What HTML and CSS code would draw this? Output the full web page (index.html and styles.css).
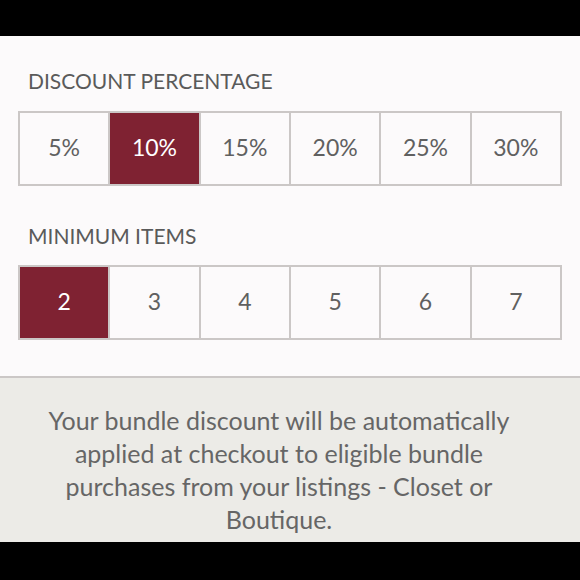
FILE: index.html
```html
<html>
<head>
<title>Bundle Discount</title>
<link rel="stylesheet" href="styles.css">
</head>
<body>

<div class="topbar"></div>

<div class="panel">
    <div class="label first">DISCOUNT PERCENTAGE</div>
    <div class="options">
        <div class="option">5%</div>
        <div class="option selected">10%</div>
        <div class="option">15%</div>
        <div class="option">20%</div>
        <div class="option">25%</div>
        <div class="option">30%</div>
    </div>

    <div class="label second">MINIMUM ITEMS</div>
    <div class="options">
        <div class="option selected">2</div>
        <div class="option">3</div>
        <div class="option">4</div>
        <div class="option">5</div>
        <div class="option">6</div>
        <div class="option">7</div>
    </div>
</div>

<div class="note">
    <p>Your bundle discount will be automatically applied at checkout to eligible bundle purchases from your listings - Closet or Boutique.</p>
</div>

</body>
</html>
```

FILE: styles.css
```css
body { margin: 0; background: #000; font-family: Lato, "Open Sans", sans-serif; }
.topbar { height: 36px; background: #000; }
.panel { height: 340px; padding: 0 18px; background: #fcfafb; border-bottom: 2px solid #cbc7c6; }
.label { margin: 0 10px; font-size: 21px; line-height: 24px; color: #5a5a5a; }
.label.first { padding-top: 33px; margin-bottom: 18px; }
.label.second { margin-top: 38px; margin-bottom: 17px; }
.options { display: grid; grid-template-columns: repeat(6, 1fr); border: 2px solid #cbc7c6; border-right: none; }
.option { height: 71px; box-sizing: border-box; padding-bottom: 3px; display: flex; align-items: center; justify-content: center; border-right: 2px solid #cbc7c6; font-size: 23px; color: #606060; }
.option.selected { background: #7f2232; color: #fff; }
.note { height: 164px; background: #ecebe7; box-sizing: border-box; padding: 26px 56px 0 34px; }
.note p { margin: 0; text-align: center; font-size: 25px; line-height: 33px; color: #666; }
```
